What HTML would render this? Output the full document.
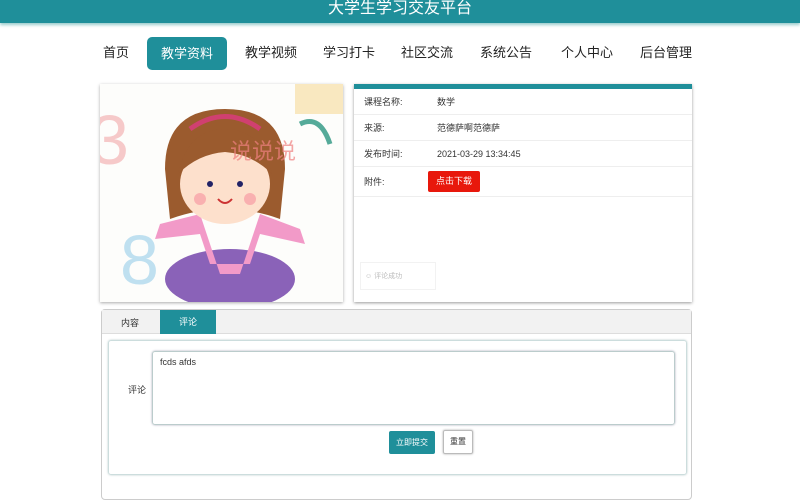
<!DOCTYPE html>
<html><head><meta charset="utf-8"><style>
*{box-sizing:border-box;margin:0;padding:0}
body{width:800px;height:500px;overflow:hidden;background:#fff;font-family:"Liberation Sans","Noto Sans CJK SC",sans-serif;position:relative;color:#333}
.hdr{position:absolute;left:0;top:0;width:800px;height:23px;background:#1f8f9a;color:#fff;text-align:center;font-size:16px;line-height:18px;box-shadow:0 2px 3px #9cc}
.nav a{position:absolute;top:44px;font-size:13px;color:#222;line-height:18px}
.act{position:absolute;left:147px;top:37px;width:80px;height:33px;background:#1f8f9a;border-radius:5px;color:#fff;font-size:13px;text-align:center;line-height:33px}
.img{position:absolute;left:100px;top:84px;width:243px;height:218px;background:#fdfdfb;overflow:hidden;box-shadow:0 1px 3px #aaa}
.card{position:absolute;left:354px;top:84px;width:338px;height:218px;border-top:5px solid #1f8f9a;box-shadow:0 1px 3px #999;background:#fff}
.row{position:absolute;left:0;width:338px;height:26px;border-bottom:1px solid #eee;font-size:9px;line-height:26px}
.row span{position:absolute;left:10px}.row b{position:absolute;left:83px;font-weight:normal}
.tabs{position:absolute;left:101px;top:309px;width:591px;height:191px;border:1px solid #ccc;border-radius:4px}
.tb{height:24px;background:#f2f2f2;border-bottom:1px solid #ddd;position:relative;font-size:9px}
.inner{position:absolute;left:6px;top:30px;width:579px;height:135px;border:1px solid #cdd;border-radius:3px;box-shadow:0 0 2px #bcc}
</style></head><body>
<div class="hdr">大学生学习交友平台</div>
<div class="nav">
<a style="left:103px">首页</a>
<div class="act">教学资料</div>
<a style="left:245px">教学视频</a>
<a style="left:323px">学习打卡</a>
<a style="left:401px">社区交流</a>
<a style="left:480px">系统公告</a>
<a style="left:561px">个人中心</a>
<a style="left:640px">后台管理</a>
</div>
<div class="img">
<svg width="243" height="218">
<text x="-10" y="80" font-size="70" fill="#f6c9c9" font-family="Liberation Sans">3</text>
<text x="20" y="200" font-size="70" fill="#bfe0f0" font-family="Liberation Sans">8</text>
<rect x="195" y="0" width="48" height="30" fill="#f9e8c0"/>
<path d="M200 40 q20 -10 30 20" stroke="#5a9" stroke-width="5" fill="none"/>
<ellipse cx="130" cy="195" rx="65" ry="30" fill="#8a62b8"/>
<path d="M60 140 L100 130 L120 190 L140 190 L160 130 L200 145 L205 160 L160 150 L150 180 L110 180 L100 150 L55 155Z" fill="#f29ac8"/>
<path d="M65 85 q0 -60 60 -60 q60 0 60 60 l-5 50 q-55 -20 -110 0z" fill="#9b5b2e"/>
<ellipse cx="125" cy="100" rx="45" ry="40" fill="#fde0cc"/>
<path d="M78 90 q10 -45 47 -45 q37 0 47 45 q-20 -20 -47 -22 q-27 2 -47 22z" fill="#9b5b2e"/>
<path d="M90 45 q35 -25 70 0" stroke="#d04070" stroke-width="5" fill="none"/>
<circle cx="110" cy="100" r="3" fill="#226"/><circle cx="140" cy="100" r="3" fill="#226"/>
<circle cx="100" cy="115" r="6" fill="#f9b0b0"/><circle cx="150" cy="115" r="6" fill="#f9b0b0"/>
<path d="M118 115 q7 8 14 0" stroke="#c33" stroke-width="2" fill="none"/>
<text x="130" y="75" font-size="22" fill="#f08080" opacity=".7" font-family="Noto Sans CJK SC">说说说</text>
</svg>
</div>
<div class="card">
<div class="row" style="top:0"><span>课程名称:</span><b>数学</b></div>
<div class="row" style="top:26px"><span>来源:</span><b>范德萨啊范德萨</b></div>
<div class="row" style="top:52px"><span>发布时间:</span><b>2021-03-29 13:34:45</b></div>
<div class="row" style="top:78px;height:30px;line-height:30px"><span>附件:</span><b style="left:74px;top:4px;width:52px;height:21px;background:#e8180c;color:#fff;border-radius:2px;line-height:21px;text-align:center">点击下载</b></div>
<div style="position:absolute;left:6px;top:173px;width:76px;height:28px;border:1px solid #f2f2f2;font-size:7px;color:#bbb;line-height:28px;padding-left:4px">☺ 评论成功</div>
</div>
<div class="tabs">
<div class="tb"><span style="position:absolute;left:19px;top:6px">内容</span><span style="position:absolute;left:58px;top:0;width:56px;height:24px;background:#1f8f9a;color:#fff;text-align:center;line-height:24px">评论</span></div>
<div class="inner">
<span style="position:absolute;left:19px;top:42px;font-size:9px">评论</span>
<div style="position:absolute;left:43px;top:10px;width:523px;height:74px;border:1px solid #bcc;border-radius:3px;box-shadow:0 0 2px #aab;font-size:9px;padding:5px 7px">fcds afds</div>
<div style="position:absolute;left:280px;top:90px;width:46px;height:23px;background:#1f8f9a;color:#fff;font-size:8px;text-align:center;line-height:23px;border-radius:2px">立即提交</div>
<div style="position:absolute;left:334px;top:89px;width:30px;height:24px;border:1px solid #bbb;font-size:8px;text-align:center;line-height:22px;border-radius:2px;box-shadow:0 0 2px #aaa">重置</div>
</div>
</div>
</body></html>
